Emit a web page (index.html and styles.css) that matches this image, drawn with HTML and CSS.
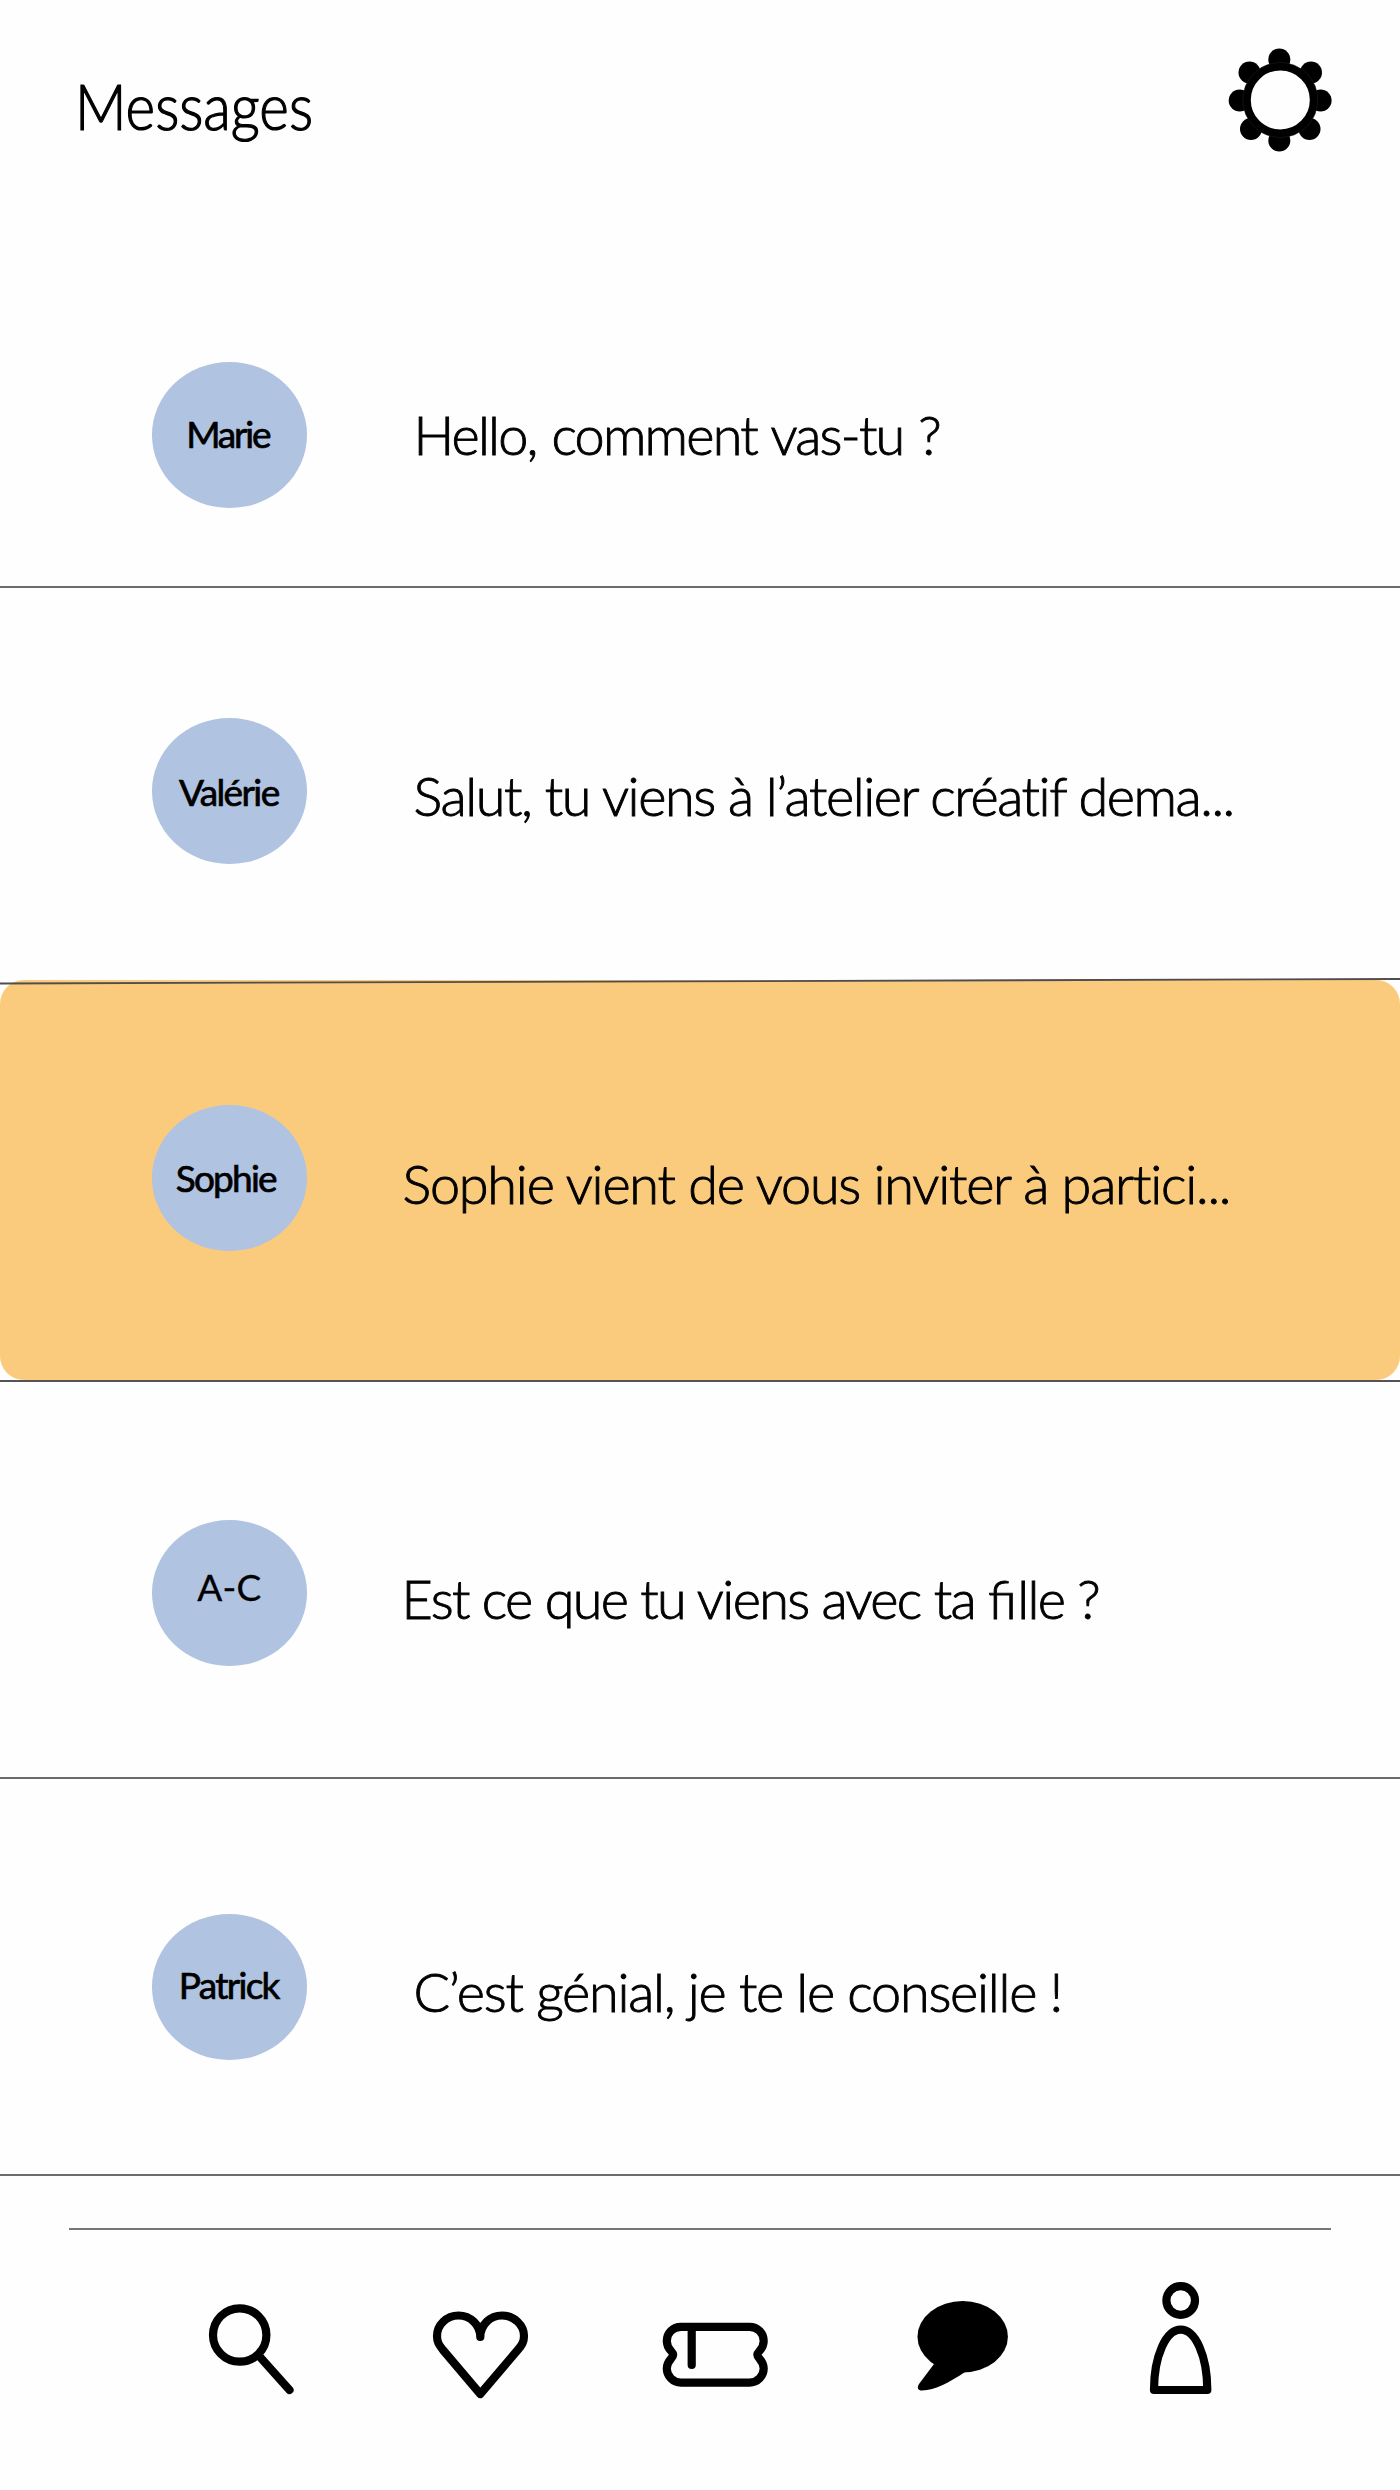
FILE: index.html
```html
<!DOCTYPE html>
<html lang="fr">
<head>
<meta charset="utf-8">
<title>Messages</title>
<link rel="stylesheet" href="styles.css">
</head>
<body>
<header class="header">
  <h1 class="title">Messages</h1>
  <svg class="gear" viewBox="1228 48 104 104" aria-label="Réglages">
    <circle cx="1279.3" cy="59.5" r="11"/><circle cx="1279.3" cy="140.5" r="11"/>
    <circle cx="1239.7" cy="100.5" r="11"/><circle cx="1320.6" cy="100.5" r="11"/>
    <circle cx="1249.5" cy="72.5" r="11"/><circle cx="1311" cy="72.5" r="11"/>
    <circle cx="1251" cy="129" r="11"/><circle cx="1309.5" cy="129" r="11"/>
    <circle class="gear-ring" cx="1280.3" cy="100" r="33.5"/>
    <circle class="gear-seam" cx="1280.3" cy="100" r="37.5"/>
  </svg>
</header>
<main>
  <article class="row row-marie">
    <div class="avatar">Marie</div>
    <p class="text">Hello, comment vas-tu ?</p>
  </article>
  <article class="row row-valerie">
    <div class="avatar">Valérie</div>
    <p class="text">Salut, tu viens à l’atelier créatif dema...</p>
  </article>
  <article class="row row-sophie">
    <svg class="slant" viewBox="0 0 1400 10"><path d="M0 6.5 1400 2"/></svg>
    <div class="avatar">Sophie</div>
    <p class="text">Sophie vient de vous inviter à partici...</p>
  </article>
  <article class="row row-ac">
    <div class="avatar">A-C</div>
    <p class="text">Est ce que tu viens avec ta <span class="lig">fi</span>lle ?</p>
  </article>
  <article class="row row-patrick">
    <div class="avatar">Patrick</div>
    <p class="text">C’est génial, je te le conseille !</p>
  </article>
</main>
<nav class="nav">
  <svg class="icon" width="100" height="130" viewBox="200 2270 100 130"><circle cx="239.7" cy="2335" r="26.7"/><path d="m260 2357 29.5 33"/></svg>
  <svg class="icon" width="104" height="130" viewBox="428 2270 104 130"><path d="M480.3 2337C480.3 2325 470.5 2315.5 458.5 2315.5S437 2325 437 2336C437 2342 439 2345 443 2350L480.3 2394 517.7 2350C522 2345 524 2342 524 2336C524 2325 514 2315.5 502 2315.5S480.3 2325 480.3 2337Z"/></svg>
  <svg class="icon" width="112" height="130" viewBox="660 2270 112 130"><path d="M681 2326.8H749.5C757.5 2326.8 763.7 2333 763.7 2341C763.7 2350 757.3 2351 757.3 2354.7S763.7 2360 763.7 2368.5C763.7 2376 757.5 2382.6 749.5 2382.6H681C673 2382.6 666.8 2376 666.8 2368.5C666.8 2360 673.2 2358.4 673.2 2354.7S666.8 2350 666.8 2341C666.8 2333 673 2326.8 681 2326.8ZM691.7 2327V2365"/></svg>
  <svg class="icon icon-solid" width="120" height="130" viewBox="900 2270 120 130"><ellipse cx="962.7" cy="2336.7" rx="45.2" ry="35.7"/><path d="M934 2364 919 2384C916.5 2388 918 2390.5 922 2390.5C935 2390.5 950 2382 965 2372Z"/></svg>
  <svg class="icon" width="68" height="130" viewBox="1148 2270 68 130"><circle cx="1180.7" cy="2300.5" r="14.3"/><path d="M1154 2390C1154 2356 1166 2329.7 1180.7 2329.7S1207.3 2356 1207.3 2390Z"/></svg>
</nav>
</body>
</html>
```
FILE: styles.css
```css
* { box-sizing: border-box; }
body {
  margin: 0;
  width: 1400px;
  height: 2490px;
  background: #fefefe;
  color: #000;
  font-family: Lato, "Open Sans", sans-serif;
}
.header {
  display: flex;
  justify-content: space-between;
  height: 150px;
  padding: 48px 68px 0 75px;
}
.title {
  margin: 20px 0 0;
  font-size: 63px;
  font-weight: 300;
  line-height: 76px;
  height: 76px;
  transform: scaleX(.9);
  transform-origin: left;
  -webkit-text-stroke: 1.2px #000;
}
.gear { width: 104px; height: 104px; flex: none; }
.gear-ring { fill: #fefefe; stroke: #000; stroke-width: 8; }
.gear-seam { fill: none; stroke: #222; stroke-width: .5; }

.row {
  display: flex;
  align-items: flex-start;
  position: relative;
  padding-left: 152px;
  border-bottom: 2px solid #6c6a6c;
}
.avatar {
  flex: none;
  width: 154.5px;
  height: 145.5px;
  border-radius: 50%;
  background: #b0c3e1;
  text-align: center;
  font-size: 37px;
  line-height: 44px;
  -webkit-text-stroke: .7px #000;
}
.text {
  margin: 0;
  font-size: 54px;
  font-weight: 300;
  line-height: 64px;
  white-space: nowrap;
  -webkit-text-stroke: .9px #000;
}
.lig { letter-spacing: 0; }

.row-marie { height: 438px; padding-top: 212px; }
.row-marie .avatar { padding: 50px 3px 0 0; letter-spacing: -2.2px; }
.row-marie .text { padding: 41px 0 0 107px; letter-spacing: -1.8px; word-spacing: 2px; }

.row-valerie { height: 392px; padding-top: 130px; border-bottom: 0; }
.row-valerie .avatar { padding: 52px 1px 0 0; letter-spacing: -1.6px; }
.row-valerie .text { padding: 46px 0 0 107px; letter-spacing: -1.43px; }

.row-sophie {
  height: 400px;
  padding-top: 125px;
  border-bottom: 0;
  border-radius: 24px;
  background: #facb7d;
}
.row-sophie .avatar { padding: 51px 7px 0 0; letter-spacing: -1.8px; }
.row-sophie .text { padding: 47px 0 0 96px; letter-spacing: -1.22px; }
.slant { position: absolute; left: 0; top: -3px; width: 1400px; height: 10px; }
.slant path { fill: none; stroke: #4f4d50; stroke-width: 1.8; }

.row-ac { height: 399px; padding-top: 138px; border-top: 2px solid #555356; }
.row-ac .avatar { padding-top: 45px; letter-spacing: .2px; -webkit-text-stroke: .3px #000; }
.row-ac .text { padding: 47px 0 0 95px; letter-spacing: -1.65px; }

.row-patrick { height: 397px; padding-top: 135px; }
.row-patrick .avatar { padding: 49px 1px 0 0; letter-spacing: -1.7px; }
.row-patrick .text { padding: 46px 0 0 107px; letter-spacing: -1.25px; }

.nav {
  display: flex;
  gap: 128px;
  width: 1262px;
  margin: 52px 0 0 69px;
  padding: 40px 0 0 131px;
  border-top: 2px solid #777;
}
.icon {
  flex: none;
  fill: none;
  stroke: #000;
  stroke-width: 8.2;
  stroke-linecap: round;
  stroke-linejoin: round;
}
.icon-solid { fill: #000; stroke: none; }
```
